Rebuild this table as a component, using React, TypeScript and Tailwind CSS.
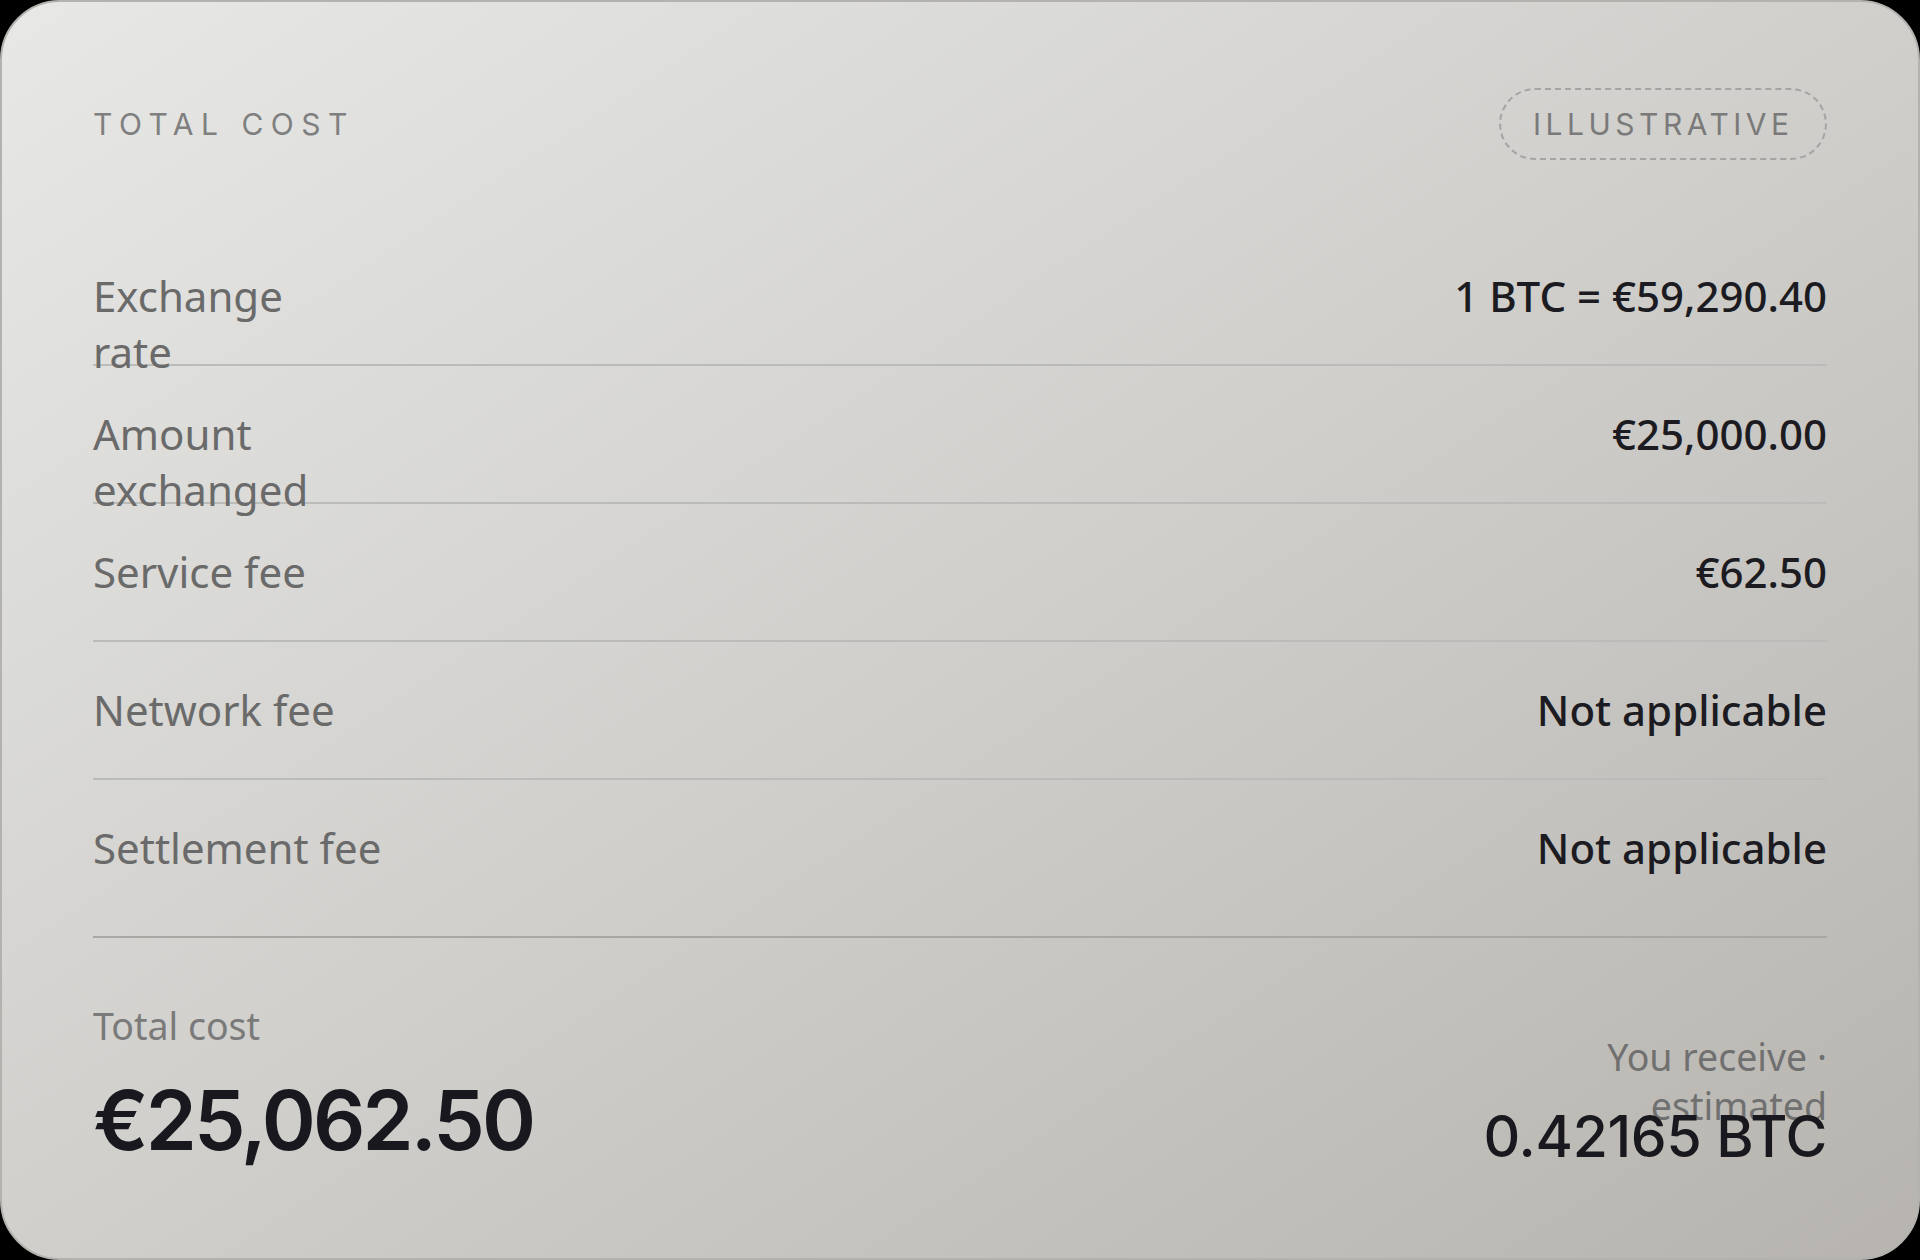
const rows = [
  { label: "Exchange\nrate", value: "1 BTC = €59,290.40" },
  { label: "Amount\nexchanged", value: "€25,000.00" },
  { label: "Service fee", value: "€62.50" },
  { label: "Network fee", value: "Not applicable" },
  { label: "Settlement fee", value: "Not applicable" },
];

const sans = "font-['Noto_Sans',sans-serif]";
const inter = "font-['Inter',sans-serif]";

export default function App() {
  return (
    <main className="bg-black w-[1920px] h-[1260px]">
      <section className="h-[1260px] rounded-[60px] border-2 border-[#b3b2ae] bg-linear-to-br from-[#e8e8e6] via-[#d0cfcc] to-[#b7b4af] px-[91px] pt-[86px]">
        <header className="flex items-center justify-between h-[72px]">
          <h2 className={`${inter} text-[30px] leading-none tracking-[0.25em] text-[#7f7f7f]`}>TOTAL COST</h2>
          <span
            className={`${inter} h-[72px] w-[328px] flex items-center pl-[32px] rounded-full border-2 border-dashed border-[#a4a4a3] text-[30px] leading-none tracking-[0.15em] text-[#7a7a7a]`}
          >
            ILLUSTRATIVE
          </span>
        </header>

        <div className="mt-[68px]">
          {rows.map((row, i) => (
            <div
              key={row.value + i}
              className={`flex items-start justify-between h-[138px] pt-[40px] text-[42px] leading-[56px] ${sans} ${
                i < rows.length - 1 ? "border-b-2 border-[#bbbbb9]" : ""
              }`}
            >
              <span className="whitespace-pre-line text-[#6a6a6a]">{row.label}</span>
              <span className="font-medium text-[#1b1b21]">{row.value}</span>
            </div>
          ))}
        </div>

        <div className="mt-[18px] border-t-2 border-[#a8a7a3] pt-[63px] flex items-end justify-between">
          <div className="flex flex-col pb-[3px]">
            <span className={`${sans} text-[37.5px] leading-[50px] text-[#7a7a7a]`}>Total cost</span>
            <span className={`${inter} mt-[29px] text-[82px] leading-none font-semibold tracking-[-0.035em] text-[#18181e]`}>
              €25,062.50
            </span>
          </div>
          <div className="flex flex-col items-end">
            <span className={`${sans} whitespace-pre-line text-right text-[37.5px] leading-[49px] text-[#707070]`}>
              {"You receive ·\nestimated"}
            </span>
            <span className={`${inter} -mt-[22px] text-[57px] leading-none font-medium tracking-[-0.005em] text-[#18181e]`}>
              0.42165 BTC
            </span>
          </div>
        </div>
      </section>
    </main>
  );
}
